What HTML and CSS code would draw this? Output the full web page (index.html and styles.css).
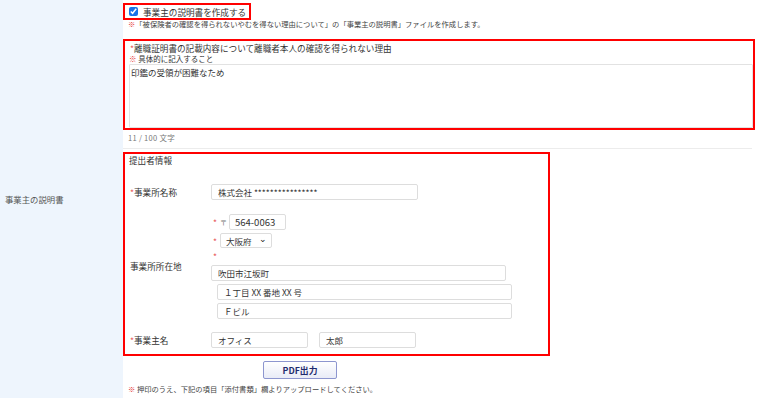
FILE: index.html
```html
<!DOCTYPE html>
<html lang="ja">
<head>
<meta charset="utf-8">
<title>事業主の説明書</title>
<link rel="stylesheet" href="styles.css">
</head>
<body>
<div class="page">
  <div class="label-cell">事業主の説明書</div>
  <div class="content">
    <label class="hl hl-check"><input type="checkbox" class="cb" checked><span>事業主の説明書を作成する</span></label>
    <p class="note"><span class="kome">※</span>「被保険者の確認を得られないやむを得ない理由について」の「事業主の説明書」ファイルを作成します。</p>

    <div class="hl hl-reason">
      <div class="reason-title"><span class="req">*</span>離職証明書の記載内容について離職者本人の確認を得られない理由</div>
      <div class="reason-sub"><span class="kome">※</span> 具体的に記入すること</div>
      <textarea class="reason-text">印鑑の受領が困難なため</textarea>
    </div>
    <div class="count">11 / 100 文字</div>

    <div class="hl hl-submitter">
      <div class="sub-head">提出者情報</div>
      <div class="form-grid">
        <div class="f-label"><span class="req">*</span>事業所名称</div>
        <div class="f-field"><input class="inp inp-office" type="text" value="株式会社 ****************"></div>

        <div class="f-label">事業所所在地</div>
        <div class="f-field addr">
          <div class="line"><span class="req">*</span><span class="postal">〒</span><input class="inp inp-zip" type="text" value="564-0063"></div>
          <div class="line line-sel"><span class="req">*</span><span class="select">大阪府<span class="chev">⌄</span></span></div>
          <div class="line star-line"><span class="req">*</span></div>
          <input class="inp inp-addr" type="text" value="吹田市江坂町">
          <input class="inp inp-addr sub" type="text" value="１丁目 XX 番地 XX 号">
          <input class="inp inp-addr sub" type="text" value="Ｆビル">
        </div>

        <div class="f-label"><span class="req">*</span>事業主名</div>
        <div class="f-field names">
          <input class="inp inp-name" type="text" value="オフィス">
          <input class="inp inp-name" type="text" value="太郎">
        </div>
      </div>
    </div>

    <button class="pdf" type="button">PDF出力</button>
    <p class="note note-bottom"><span class="kome">※</span> 押印のうえ、下記の項目「添付書類」欄よりアップロードしてください。</p>
  </div>
</div>
</body>
</html>
```

FILE: styles.css
```css
* { box-sizing: border-box; }
html, body { margin: 0; padding: 0; background: #fff; }
body {
  font-family: "Noto Sans CJK JP", "Noto Sans", sans-serif;
  font-size: 8.5px;
  color: #333;
}
.page {
  display: flex;
  height: 398px;
  overflow: hidden;
}
.label-cell {
  width: 123px;
  flex: none;
  background: #eef5fd;
  display: flex;
  align-items: center;
  padding-left: 5px;
  color: #555;
  font-size: 8.4px;
}
.content {
  width: 632px;
  padding-top: 3px;
}
.hl { border: 2px solid #f00; display: block; }

.hl-check {
  display: flex;
  align-items: center;
  width: 128px;
  height: 17px;
  padding-left: 4px;
  font-size: 8.6px;
  color: #333;
}
.cb {
  width: 9px;
  height: 9px;
  margin: 0 5px 0 0;
  accent-color: #1a73e8;
}
.note {
  margin: 0;
  padding-left: 5px;
  font-size: 7.3px;
  line-height: 8px;
  color: #444;
  white-space: nowrap;
}
.kome { color: #e53030; font-weight: bold; }
.req { color: #e85a5a; }

.hl-reason {
  margin-top: 11px;
  width: 632px;
  height: 91px;
  padding: 1px 0 0 4px;
  display: flex;
  flex-direction: column;
}
.reason-title { line-height: 12px; padding-left: 1px; font-size: 8.6px; }
.reason-sub { line-height: 10px; font-size: 7.5px; }
.reason-text {
  flex: 1;
  width: 100%;
  margin: 0;
  border: 1px solid #e2e2e2;
  border-radius: 1px;
  padding: 1px 1px;
  font-family: inherit;
  font-size: 8.5px;
  line-height: 12px;
  color: #333;
  resize: none;
}
.count {
  width: 629px;
  padding: 3px 0 5px 5px;
  line-height: 10px;
  font-size: 7.5px;
  letter-spacing: 0.3px;
  color: #777;
  border-bottom: 1px solid #ececec;
}

.hl-submitter {
  margin-top: 3px;
  width: 427px;
  height: 204px;
  padding: 0 0 0 4px;
}
.sub-head { line-height: 12px; font-size: 8.6px; }
.form-grid {
  margin-top: 18px;
  padding-left: 1px;
  display: grid;
  grid-template-columns: 81px 1fr;
  row-gap: 13px;
  align-items: center;
}
.f-label { font-size: 8.6px; color: #333; }
.f-field { display: flex; flex-direction: column; align-items: flex-start; }
.addr { padding-top: 1px; }
.inp {
  height: 16px;
  border: 1px solid #ddd;
  border-radius: 2px;
  padding: 0 0 0 6px;
  font-family: inherit;
  font-size: 8.5px;
  color: #333;
  background: #fff;
  margin: 0;
}
.inp-office { width: 207px; }
.line { display: flex; align-items: center; height: 16px; }
.line-sel { height: 15px; margin-top: 3px; }
.addr .line .req { width: 9px; padding-left: 2px; }
.postal { width: 9px; color: #777; font-size: 7px; }
.inp-zip { width: 57px; padding-left: 5px; font-size: 9.5px; }
.select {
  display: flex;
  align-items: center;
  justify-content: space-between;
  width: 52px;
  height: 15px;
  border: 1px solid #ddd;
  border-radius: 2px;
  padding: 0 4px 0 5px;
  font-size: 8.5px;
}
.chev { font-size: 9px; line-height: 9px; color: #222; margin-top: -4px; }
.star-line { height: 14px; margin-top: 2px; align-items: flex-start; }
.inp-addr { width: 295px; margin-top: 1px; }
.inp-addr.sub { margin-left: 6px; margin-top: 3px; }
.names { flex-direction: row; gap: 11px; }
.inp-name { width: 97px; }

.pdf {
  display: block;
  margin: 5px 0 0 140px;
  width: 74px;
  height: 18px;
  border: 1px solid #8d96cf;
  border-radius: 2px;
  background: linear-gradient(#ffffff, #e9ecf7);
  font-family: inherit;
  font-weight: bold;
  font-size: 8.8px;
  color: #1f2b6e;
  padding: 0;
}
.note-bottom { margin-top: 6px; }
```
